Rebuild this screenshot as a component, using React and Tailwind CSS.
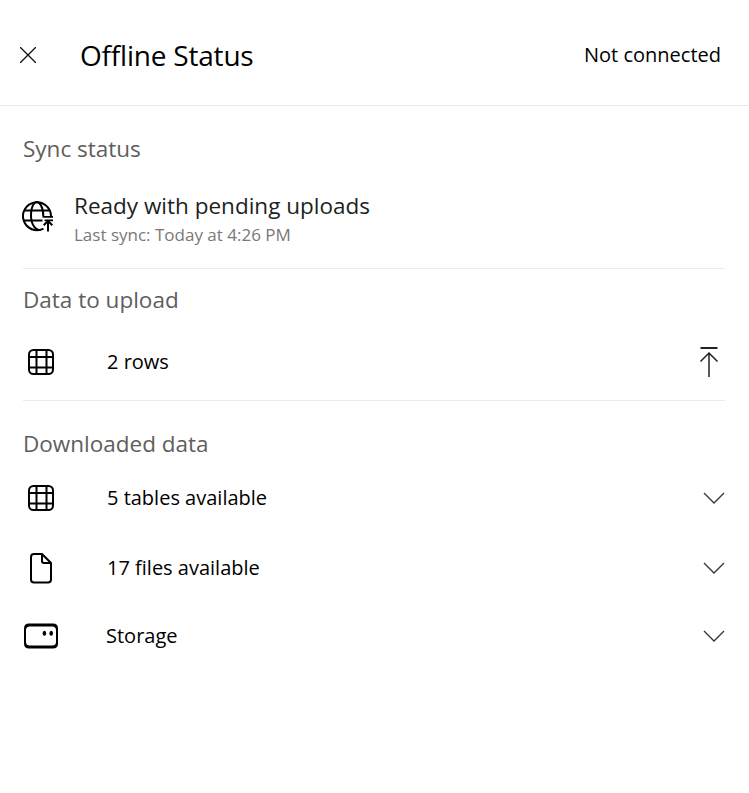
import React from "react";

function GlobeUploadIcon() {
  return (
    <svg width="32" height="32" viewBox="0 0 32 32" fill="none" stroke="#000" strokeWidth="2">
      <path d="M21.5 28.6A14 14 0 1 1 29 16" />
      <path d="M3 10.5H28M2 20.5H20.5" />
      <path d="M18.6 29.6C15 31 9 26 9 15.5S13 2 15 2s6.3 4 6.3 14" />
      <path d="M20.5 16.8H31M22.5 20.4H31" strokeWidth="1.8" />
      <path d="M26 31.5V21.5M21.7 25.3L26 21L30.3 25.3" />
    </svg>
  );
}

function GridIcon() {
  return (
    <svg width="28" height="28" viewBox="0 0 28 28" fill="none" stroke="#000" strokeWidth="2">
      <rect x="2" y="2" width="24" height="24" rx="4.5" />
      <path d="M9.5 2V26M19.5 2V26M2 9H26M2 19.5H26" />
    </svg>
  );
}

function FileIcon() {
  return (
    <svg width="24" height="32" viewBox="0 0 24 32" fill="none" stroke="#000" strokeWidth="2">
      <path d="M5 2H13L22 11V27.5a3 3 0 0 1-3 3H5a3 3 0 0 1-3-3V5a3 3 0 0 1 3-3Z" />
      <path d="M13 2V9a2 2 0 0 0 2 2H22" />
    </svg>
  );
}

function StorageIcon() {
  return (
    <svg width="36" height="26" viewBox="0 0 36 26">
      <path
        fillRule="evenodd"
        d="M6 .5H30Q35 .5 35 5.5V20.5Q35 25.5 30 25.5H6Q1 25.5 1 20.5V5.5Q1 .5 6 .5ZM7 3.5Q3 3.5 3 7V19Q3 22.5 7 22.5H29Q33 22.5 33 19V7Q33 3.5 29 3.5Z"
      />
      <ellipse cx="21.4" cy="10.2" rx="1.8" ry="2.5" />
      <ellipse cx="28.2" cy="10.2" rx="1.8" ry="2.5" />
    </svg>
  );
}

function Chevron() {
  return (
    <svg className="mb-px" width="22" height="12" viewBox="0 0 22 12" fill="none" stroke="#333" strokeWidth="1.3">
      <path d="M1 1L11 11L21 1" />
    </svg>
  );
}

function DataRow({ icon, label, action, className, labelClass }) {
  return (
    <div className={`flex items-center ${className}`}>
      <div className="flex w-9 shrink-0 justify-center">{icon}</div>
      <span className={`text-[20px] leading-7 text-black ${labelClass}`}>{label}</span>
      <div className="ml-auto">{action}</div>
    </div>
  );
}

export default function App() {
  return (
    <div className="h-[793px] w-[749px] overflow-hidden bg-white font-['Open_Sans',sans-serif] whitespace-nowrap">
      <header className="flex h-[106px] items-center border-b border-[#edebe9] pt-[5px] pr-7 pl-5 text-black">
        <svg width="16" height="16" viewBox="0 0 16 16" fill="none" stroke="#111" strokeWidth="1.3">
          <path d="M0 0L16 16M16 0L0 16" />
        </svg>
        <h1 className="ml-11 text-[28px] tracking-[-0.2px]">Offline Status</h1>
        <span className="ml-auto text-[20px] tracking-[0px]">Not connected</span>
      </header>
      <main className="pr-6 pl-[23px]">
        <section className="h-[163px] border-b border-[#edebe9] pt-[27px]">
          <h2 className="text-[22.5px] leading-8 tracking-[0px] text-[#605e5c]">Sync status</h2>
          <div className="mt-[25px] flex">
            <div className="mt-2.5 -ml-px h-8 w-8">
              <GlobeUploadIcon />
            </div>
            <div className="ml-5">
              <div className="text-[22.5px] leading-8 tracking-[0px] text-[#201f1e]">Ready with pending uploads</div>
              <div className="mt-px text-[17px] leading-6 tracking-[0px] text-[#7a7877]">Last sync: Today at 4:26 PM</div>
            </div>
          </div>
        </section>
        <section className="h-[132px] border-b border-[#edebe9] pt-[15px]">
          <h2 className="text-[22.5px] leading-8 tracking-[0px] text-[#605e5c]">Data to upload</h2>
          <DataRow
            className="mt-6 h-11"
            icon={<GridIcon />}
            label="2 rows"
            labelClass="ml-12"
            action={
              <svg className="mr-1.5" width="20" height="32" viewBox="0 0 20 32" fill="none" stroke="#222" strokeWidth="1.5">
                <path d="M1.5 2H18.5" strokeWidth="2" />
                <path d="M10 31V7M1.5 15.5L10 7L18.5 15.5" />
              </svg>
            }
          />
        </section>
        <section className="pt-[27px]">
          <h2 className="text-[22.5px] leading-8 tracking-[0px] text-[#605e5c]">Downloaded data</h2>
          <DataRow className="mt-[3px] h-[70px]" icon={<GridIcon />} label="5 tables available" labelClass="ml-12" action={<Chevron />} />
          <DataRow className="h-[70px]" icon={<FileIcon />} label="17 files available" labelClass="ml-12" action={<Chevron />} />
          <DataRow className="h-[66px]" icon={<StorageIcon />} label="Storage" labelClass="ml-[47px]" action={<Chevron />} />
        </section>
      </main>
    </div>
  );
}
